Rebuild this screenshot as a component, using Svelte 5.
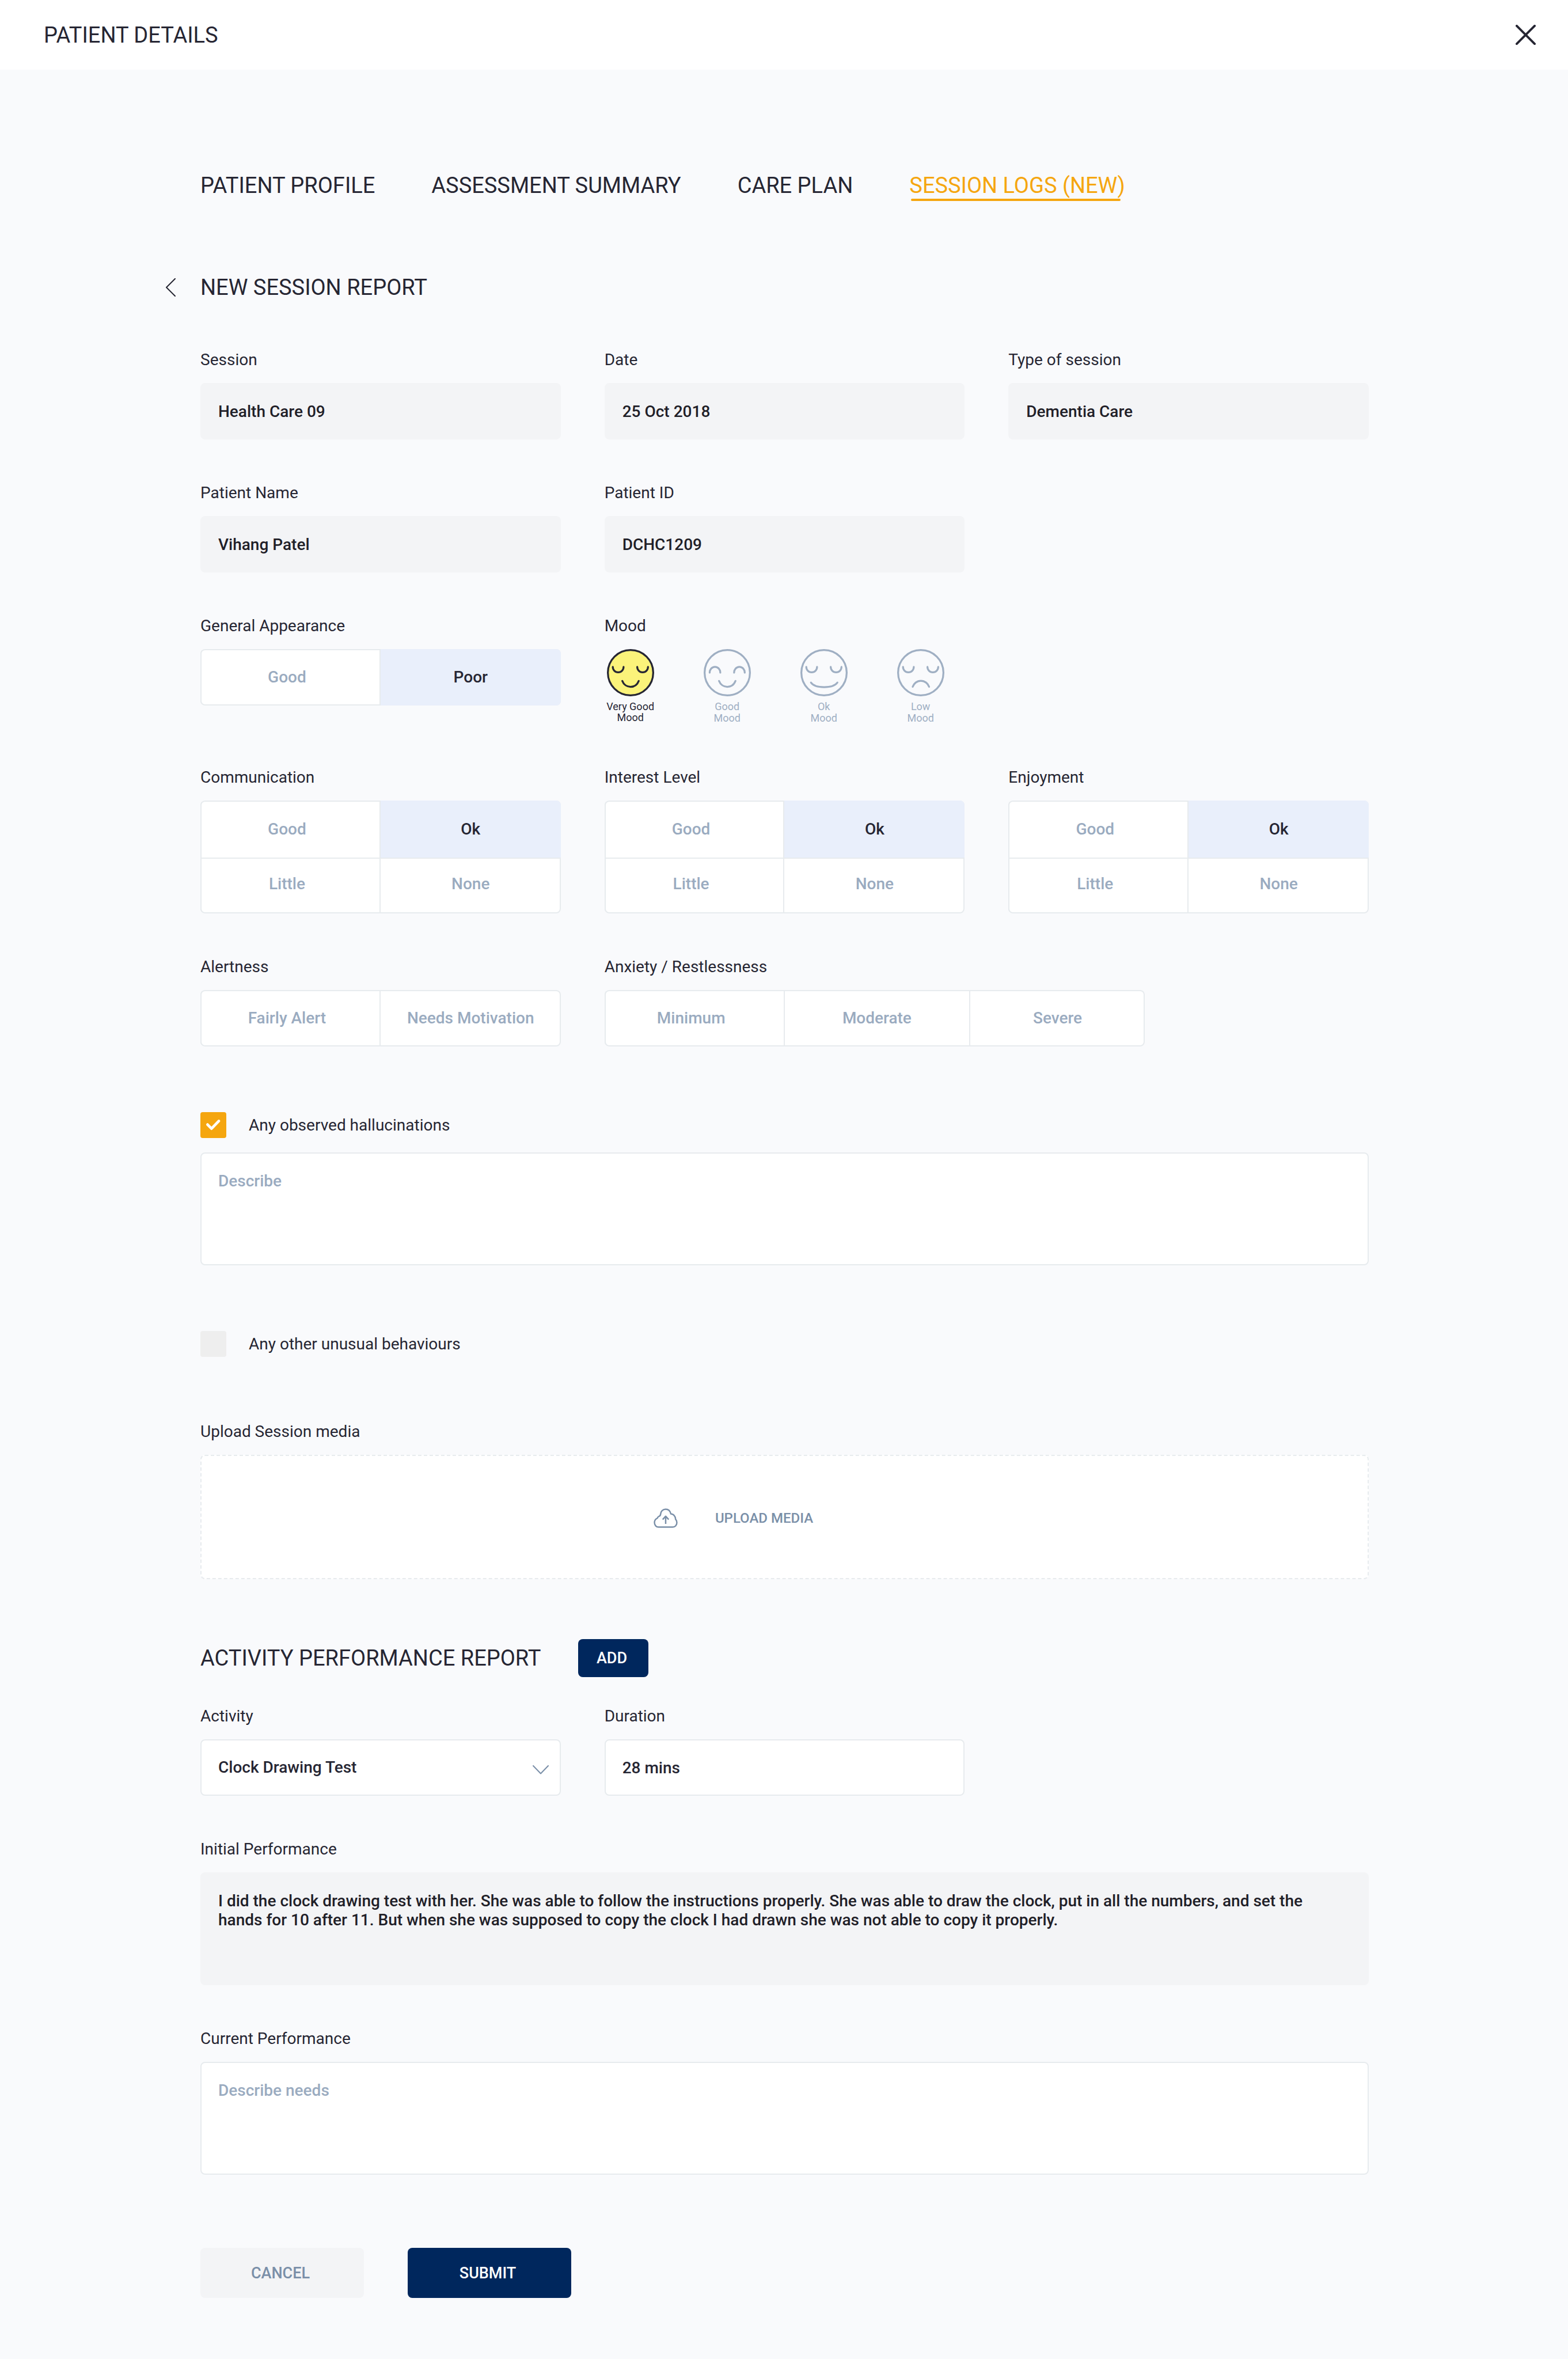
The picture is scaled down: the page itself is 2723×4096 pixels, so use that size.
<script>
  const tabs = ['PATIENT PROFILE', 'ASSESSMENT SUMMARY', 'CARE PLAN', 'SESSION LOGS (NEW)'];
  let activeTab = $state('SESSION LOGS (NEW)');

  const details = [
    { id: 'session', label: 'Session', value: 'Health Care 09' },
    { id: 'date', label: 'Date', value: '25 Oct 2018' },
    { id: 'type', label: 'Type of session', value: 'Dementia Care' },
    { id: 'name', label: 'Patient Name', value: 'Vihang Patel' },
    { id: 'pid', label: 'Patient ID', value: 'DCHC1209' }
  ];

  const downEyes = 'M10.7 32.5c0 5.5 4 9.8 9.8 9.8s9.8-4.3 9.8-9.8M55.2 32.5c0 5.5 4 9.8 9.8 9.8s9.8-4.3 9.8-9.8';
  const upEyes = 'M10.9 43c0-5.5 4-10.7 9.7-10.7s9.7 5.2 9.7 10.7M55.4 43c0-5.5 4-10.7 9.7-10.7s9.7 5.2 9.7 10.7';
  const smile = 'M28 58c2.5 6.5 8.2 10.7 15 10.7s12.4-4.2 14.9-10.7';
  const moods = [
    { name: 'Very Good', path: downEyes + smile },
    { name: 'Good', path: upEyes + smile },
    { name: 'Ok', path: downEyes + 'M19.2 61c4 6 12 8.3 24 8.3s20-2.3 24.2-8.3' },
    { name: 'Low', path: downEyes + 'M28.3 68.7c2-6 7.7-11 14.9-11s13 5 15 11' }
  ];
  let mood = $state('Very Good');

  const ratings = [
    { id: 'communication', label: 'Communication' },
    { id: 'interest', label: 'Interest Level' },
    { id: 'enjoyment', label: 'Enjoyment' }
  ];
  let answers = $state({
    appearance: 'Poor',
    communication: 'Ok',
    interest: 'Ok',
    enjoyment: 'Ok',
    alertness: '',
    anxiety: ''
  });

  let hallucinations = $state(true);
  let unusual = $state(false);
  let activity = $state('Clock Drawing Test');
  let duration = $state('28 mins');
  const initial =
    'I did the clock drawing test with her. She was able to follow the instructions properly. She was able to draw the clock, put in all the numbers, and set the hands for 10 after 11. But when she was supposed to copy the clock I had drawn she was not able to copy it properly.';
</script>

{#snippet segments(id, label, options, kind)}
  <fieldset class="field" class:wide={kind === 'triple'}>
    <legend class="label">{label}</legend>
    <div class="segments {kind}">
      {#each options as option}
        <label class="segment">
          <input type="radio" name={id} value={option} bind:group={answers[id]} />
          <span>{option}</span>
        </label>
      {/each}
    </div>
  </fieldset>
{/snippet}

<header class="topbar">
  <h1>PATIENT DETAILS</h1>
  <button class="icon-button" aria-label="Close">
    <svg class="close" viewBox="0 0 36 36"><path d="M2 2l32 32M34 2L2 34" /></svg>
  </button>
</header>

<main>
  <nav class="tabs">
    {#each tabs as tab}
      <a href="#tab" class:active={activeTab === tab} onclick={() => (activeTab = tab)}>{tab}</a>
    {/each}
  </nav>

  <div class="report-title">
    <button class="icon-button" aria-label="Back">
      <svg class="back" viewBox="0 0 18 32"><path d="M17 1L2 16l15 15" /></svg>
    </button>
    <h2>NEW SESSION REPORT</h2>
  </div>

  <form onsubmit={(e) => e.preventDefault()}>
    <div class="grid">
      {#each details as item}
        <div class="field">
          <label class="label" for={item.id}>{item.label}</label>
          <input class="box locked" id={item.id} type="text" value={item.value} readonly />
        </div>
      {/each}
    </div>

    <div class="grid">
      {@render segments('appearance', 'General Appearance', ['Good', 'Poor'], 'pair')}
      <fieldset class="field">
        <legend class="label">Mood</legend>
        <div class="moods">
          {#each moods as m}
            <label class="mood">
              <input type="radio" name="mood" value={m.name} bind:group={mood} />
              <svg viewBox="0 0 86 86">
                <circle cx="43" cy="43" r="41.3" />
                <path d={m.path} />
              </svg>
              <span>{m.name}<br />Mood</span>
            </label>
          {/each}
        </div>
      </fieldset>
    </div>

    <div class="grid">
      {#each ratings as r}
        {@render segments(r.id, r.label, ['Good', 'Ok', 'Little', 'None'], 'quad')}
      {/each}
    </div>

    <div class="grid">
      {@render segments('alertness', 'Alertness', ['Fairly Alert', 'Needs Motivation'], 'pair')}
      {@render segments('anxiety', 'Anxiety / Restlessness', ['Minimum', 'Moderate', 'Severe'], 'triple')}
    </div>

    <div class="section">
      <label class="check">
        <input type="checkbox" bind:checked={hallucinations} />
        <svg viewBox="0 0 48 48"><path d="M13.2 23l7.4 7.6L34.2 16.4" /></svg>
        <span>Any observed hallucinations</span>
      </label>
      <textarea class="box area" aria-label="Describe hallucinations" placeholder="Describe"></textarea>
    </div>

    <div class="section">
      <label class="check">
        <input type="checkbox" bind:checked={unusual} />
        <svg viewBox="0 0 48 48"><path d="M13.2 23l7.4 7.6L34.2 16.4" /></svg>
        <span>Any other unusual behaviours</span>
      </label>
    </div>

    <div class="section field">
      <span class="label" id="upload-label">Upload Session media</span>
      <button type="button" class="upload" aria-describedby="upload-label">
        <svg class="cloud" viewBox="0 0 44 36">
          <path d="M9 34.5h26c4.500 0 7.600-3.800 7.600-8.300 0-2.500-.8-4.500-2.400-6.200-.5-6-3.700-9.500-8.700-10C30.300 4.600 26.800 1.500 22 1.500c-5.200 0-9 3.800-9.300 9-.1 2.300-.6 3.400-3 4.200-1.600.6-2.400 1.700-3 3.300C3 19.800 1.400 22.300 1.400 26c0 5 3.200 8.500 7.600 8.500z" />
          <path d="M22 28.500V15M16.500 20.500L22 14.500l5.500 6" />
        </svg>
        UPLOAD MEDIA
      </button>
    </div>

    <div class="activity-title">
      <h2>ACTIVITY PERFORMANCE REPORT</h2>
      <button type="button" class="button add">ADD</button>
    </div>

    <div class="grid">
      <div class="field">
        <label class="label" for="activity">Activity</label>
        <div class="select">
          <select class="box" id="activity" bind:value={activity}>
            <option>Clock Drawing Test</option>
          </select>
          <svg viewBox="0 0 28 16"><path d="M1 1l13 13.500L27 1" /></svg>
        </div>
      </div>
      <div class="field">
        <label class="label" for="duration">Duration</label>
        <input class="box" id="duration" type="text" bind:value={duration} />
      </div>
    </div>

    <div class="field row">
      <label class="label" for="initial">Initial Performance</label>
      <textarea class="box area locked" id="initial" readonly value={initial}></textarea>
    </div>

    <div class="field row">
      <label class="label" for="current">Current Performance</label>
      <textarea class="box area" id="current" placeholder="Describe needs"></textarea>
    </div>

    <div class="actions">
      <button type="button" class="button cancel">CANCEL</button>
      <button type="submit" class="button submit">SUBMIT</button>
    </div>
  </form>
</main>

<style>
  :global(body) {
    background: #f9fafc;
    color: #262633;
    font-family: Roboto, 'Liberation Sans', sans-serif;
    font-size: 28px;
    line-height: 32px;
  }

  h1, h2 {
    margin: 0;
    font-size: 38px;
    font-weight: 400;
    line-height: 48px;
  }

  svg {
    display: block;
    fill: none;
    stroke: currentColor;
    stroke-linecap: round;
    stroke-linejoin: round;
  }

  input, textarea, select, button {
    box-sizing: border-box;
    margin: 0;
    font: inherit;
    color: inherit;
  }

  .topbar {
    display: flex;
    align-items: center;
    justify-content: space-between;
    height: 121px;
    padding: 0 56px 0 76px;
    background: #fff;
  }

  .icon-button {
    padding: 0;
    border: 0;
    background: none;
    cursor: pointer;
  }

  .close {
    width: 35px;
    height: 35px;
    stroke-width: 4;
  }

  main {
    padding: 177px 346px 106px 348px;
  }

  .tabs {
    display: flex;
    gap: 98px;
    font-size: 38px;
    line-height: 48px;
  }

  .tabs a {
    position: relative;
    color: inherit;
    text-decoration: none;
  }

  .tabs a.active {
    color: #f5a60f;
  }

  .tabs a.active::after {
    content: '';
    position: absolute;
    left: 3px;
    right: 8px;
    bottom: -3px;
    height: 4px;
    border-radius: 2px;
    background: #f5a60f;
  }

  .report-title {
    display: flex;
    align-items: center;
    gap: 43px;
    margin: 129px 0 86px -61px;
  }

  .back {
    width: 18px;
    height: 32px;
    stroke-width: 2;
  }

  .grid {
    display: grid;
    grid-template-columns: repeat(3, 1fr);
    gap: 77px 76px;
  }

  .grid + .grid, .row {
    margin-top: 77px;
  }

  .field {
    display: flex;
    flex-direction: column;
    min-width: 0;
    margin-inline: 0;
    padding: 0;
    border: 0;
  }

  .wide {
    grid-column: span 2;
  }

  .label {
    display: block;
    height: 32px;
    margin-bottom: 24px;
    padding: 0;
  }

  .box {
    width: 100%;
    height: 98px;
    padding: 0 29px;
    border: 2px solid #e7ebee;
    border-radius: 8px;
    background: #fff;
    font-weight: 500;
    outline: none;
  }

  .box.locked {
    border-color: #f3f4f6;
    background: #f3f4f6;
    color: #1f2028;
  }

  .area {
    display: block;
    height: 196px;
    padding: 31px 62px 31px 29px;
    line-height: 33px;
    resize: none;
  }

  .box::placeholder {
    color: #9aabc0;
    opacity: 1;
  }

  .segments {
    display: grid;
    grid-template-columns: 311fr 315fr;
    border-radius: 8px;
    overflow: hidden;
    background: #fff;
    box-shadow: inset 0 0 0 2px #e7ebee;
    color: #9aabc0;
    font-weight: 500;
  }

  .pair {
    grid-template-rows: 98px;
  }

  .quad {
    grid-template-rows: 101px 95px;
  }

  .triple {
    grid-template-columns: 311fr 322fr 305fr;
    grid-template-rows: 98px;
    width: 70.7%;
  }

  .segment {
    display: grid;
    cursor: pointer;
  }

  .segment input, .mood input {
    appearance: none;
    position: absolute;
    width: 0;
    height: 0;
  }

  .segment span {
    display: grid;
    place-items: center;
    border-left: 2px solid #e7ebee;
  }

  .segment:first-child span, .quad .segment:nth-child(3) span {
    padding-right: 12px;
  }

  .quad .segment:nth-child(-n + 2) span {
    border-bottom: 2px solid #e7ebee;
  }

  .quad .segment:nth-child(n + 3) span {
    padding-bottom: 8px;
  }

  .segment input:checked + span {
    background: #e9effb;
    color: #262633;
  }

  .moods {
    display: flex;
    gap: 86px;
    padding-left: 4px;
  }

  .mood {
    display: flex;
    flex-direction: column;
    align-items: center;
    gap: 8px;
    width: 82px;
    color: #9fafc3;
    font-size: 18px;
    line-height: 20px;
    text-align: center;
    cursor: pointer;
  }

  .mood span {
    white-space: nowrap;
  }

  .mood svg {
    width: 82px;
    height: 82px;
    stroke-width: 3.4;
  }

  .mood:has(input:checked) {
    color: #262633;
    line-height: 19px;
  }

  .mood:has(input:checked) circle {
    fill: #fbf37a;
  }

  .section {
    margin-top: 114px;
  }

  .check {
    display: grid;
    grid-template-columns: 45px 1fr;
    align-items: center;
    column-gap: 39px;
    cursor: pointer;
  }

  .check input {
    grid-area: 1 / 1;
    appearance: none;
    width: 45px;
    height: 45px;
    border-radius: 4px;
    background: #eee;
  }

  .check input:checked {
    background: #f5a60f;
  }

  .check svg {
    grid-area: 1 / 1;
    z-index: 1;
    color: #fff;
    stroke-width: 5;
    visibility: hidden;
    pointer-events: none;
  }

  .check input:checked + svg {
    visibility: visible;
  }

  .check + .area {
    margin-top: 25px;
  }

  .upload {
    display: flex;
    align-items: center;
    justify-content: center;
    gap: 65px;
    height: 216px;
    padding: 4px 178px 0 0;
    border: 2px dashed #e7ebee;
    border-radius: 8px;
    background: #fff;
    color: #7a8fa8;
    font-size: 24px;
    font-weight: 500;
    cursor: pointer;
  }

  .cloud {
    width: 42px;
    height: 34px;
    stroke-width: 2.6;
    stroke-linecap: butt;
  }

  .activity-title {
    display: flex;
    align-items: center;
    gap: 65px;
    margin: 104px 0 52px;
  }

  .button {
    padding: 0 6px 0 0;
    border: 0;
    border-radius: 8px;
    background: #00275d;
    color: #fff;
    font-size: 27px;
    font-weight: 500;
    cursor: pointer;
  }

  .add {
    width: 122px;
    height: 66px;
  }

  .select {
    display: grid;
    align-items: center;
  }

  .select select {
    grid-area: 1 / 1;
    appearance: none;
  }

  .select svg {
    grid-area: 1 / 1;
    justify-self: end;
    z-index: 1;
    width: 28px;
    height: 16px;
    margin: 8px 21px 0 0;
    color: #7a8fa8;
    stroke-width: 2;
    pointer-events: none;
  }

  .actions {
    display: flex;
    gap: 76px;
    margin-top: 127px;
  }

  .cancel, .submit {
    width: 284px;
    height: 87px;
  }

  .cancel {
    background: #f3f4f6;
    color: #7a8fa8;
  }
</style>
